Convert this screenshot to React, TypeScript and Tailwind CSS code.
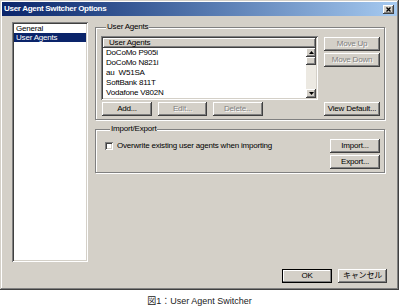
import React from 'react'

const RAISED =
  'shadow-[inset_-1px_-1px_#404040,inset_1px_1px_#ffffff,inset_-2px_-2px_#808080,inset_2px_2px_#d4d0c8]'
const SUNKEN =
  'shadow-[inset_1px_1px_#808080,inset_-1px_-1px_#ffffff,inset_2px_2px_#404040,inset_-2px_-2px_#d4d0c8]'
const UI =
  "font-['Liberation_Sans','Noto_Sans_CJK_JP',sans-serif] text-[8px] tracking-[-0.2px] leading-[10px]"

type BtnProps = { label: string; width: string; disabled?: boolean; isDefault?: boolean }

const Btn: React.FC<BtnProps> = ({ label, width, disabled, isDefault }) => (
  <div
    className={`flex h-[14px] shrink-0 items-center justify-center bg-[#d4d0c8] ${width} ${
      isDefault ? 'border border-black shadow-[inset_-1px_-1px_#808080,inset_1px_1px_#ffffff]' : RAISED
    } ${disabled ? 'text-[#808080] [text-shadow:1px_1px_0_#ffffff]' : 'text-black'}`}
  >
    {label}
  </div>
)

const agents = ['DoCoMo P905i', 'DoCoMo N821i', 'au  W51SA', 'SoftBank 811T', 'Vodafone V802N']

const Arrow: React.FC<{ up?: boolean }> = ({ up }) => (
  <div className={`flex h-[9px] w-[10px] items-center justify-center bg-[#d4d0c8] ${RAISED}`}>
    <svg width="5" height="3" viewBox="0 0 5 3">
      <polygon points={up ? '0,3 2.5,0 5,3' : '0,0 2.5,3 5,0'} fill="#000" />
    </svg>
  </div>
)

export default function App() {
  return (
    <div className={`h-[308px] w-[399px] bg-white ${UI}`}>
      {/* Dialog window */}
      <div
        className="flex h-[290px] w-[399px] flex-col bg-[#d4d0c8] px-[2px] pt-[2px] shadow-[inset_-1px_-1px_#404040,inset_1px_1px_#d4d0c8,inset_-2px_-2px_#808080,inset_2px_2px_#ffffff]"
      >
        {/* Title bar */}
        <div className="flex h-[14px] items-center justify-between bg-gradient-to-r from-[#0a246a] to-[#a6caf0] pl-[2px] pr-[3px]">
          <span className="font-['Liberation_Sans',sans-serif] text-[8px] font-bold tracking-[-0.3px] text-white">
            User Agent Switcher Options
          </span>
          <div className={`flex h-[9px] w-[11px] items-center justify-center bg-[#d4d0c8] ${RAISED}`}>
            <svg width="5" height="5" viewBox="0 0 5 5">
              <path d="M0.5 0.5L4.5 4.5M4.5 0.5L0.5 4.5" stroke="#000" strokeWidth="1.3" />
            </svg>
          </div>
        </div>

        {/* Body */}
        <div className="flex pl-[10px] pt-[6px]">
          {/* Category list */}
          <div className={`h-[240px] w-[76px] bg-white p-[2px] ${SUNKEN}`}>
            <div className="h-[9px] pl-[2px] leading-[9px] text-black">General</div>
            <div className="h-[9px] bg-[#0a246a] pl-[2px] leading-[9px] text-white">User Agents</div>
          </div>

          <div className="ml-[7px] flex w-[290px] flex-col">
            {/* User Agents group */}
            <fieldset className="border border-[#808080] pb-[3px] pl-[5px] pr-[4px] pt-[4px] shadow-[inset_1px_1px_0_#ffffff,1px_1px_0_#ffffff]">
              <legend className="ml-[5px] bg-[#d4d0c8] px-[1px] leading-[10px]">User Agents</legend>
              <div className="flex gap-[6px]">
                <div className={`flex h-[64px] w-[217px] flex-col bg-white p-[2px] ${SUNKEN}`}>
                  <div className={`h-[10px] shrink-0 bg-[#d4d0c8] pl-[6px] leading-[10px] ${RAISED}`}>User Agents</div>
                  <div className="flex min-h-0 flex-1">
                    <div className="flex-1 overflow-hidden">
                      {agents.map((a) => (
                        <div key={a} className="h-[10px] whitespace-pre pl-[3px] leading-[10px] text-black">
                          {a}
                        </div>
                      ))}
                    </div>
                    <div className="flex w-[10px] flex-col bg-[#ece9e2]">
                      <Arrow up />
                      <div className={`h-[8px] bg-[#d4d0c8] ${RAISED}`} />
                      <div className="flex-1" />
                      <Arrow />
                    </div>
                  </div>
                </div>
                <div className="flex flex-col gap-[2px] pt-[1px]">
                  <Btn label="Move Up" width="w-[56px]" disabled />
                  <Btn label="Move Down" width="w-[56px]" disabled />
                </div>
              </div>
              <div className="mt-[2px] flex pl-[1px]">
                <Btn label="Add..." width="w-[50px]" />
                <div className="ml-[6px]">
                  <Btn label="Edit..." width="w-[49px]" disabled />
                </div>
                <div className="ml-[6px]">
                  <Btn label="Delete..." width="w-[50px]" disabled />
                </div>
                <div className="ml-auto">
                  <Btn label="View Default..." width="w-[56px]" />
                </div>
              </div>
            </fieldset>

            {/* Import/Export group */}
            <fieldset className="mt-[4px] flex border border-[#808080] pb-[3px] pl-[9px] pr-[4px] pt-[5px] shadow-[inset_1px_1px_0_#ffffff,1px_1px_0_#ffffff]">
              <legend className="ml-[5px] bg-[#d4d0c8] px-[1px] leading-[10px]">Import/Export</legend>
              <div className="flex w-full">
                <div className="flex items-start gap-[4px] pt-[3px]">
                  <div className={`h-[8px] w-[8px] bg-white ${SUNKEN}`} />
                  <span className="leading-[8px] text-black">Overwrite existing user agents when importing</span>
                </div>
                <div className="ml-auto flex flex-col gap-[2px]">
                  <Btn label="Import..." width="w-[50px]" />
                  <Btn label="Export..." width="w-[50px]" />
                </div>
              </div>
            </fieldset>
          </div>
        </div>

        {/* Footer buttons */}
        <div className="mt-[7px] flex justify-end gap-[6px] pr-[10px]">
          <Btn label="OK" width="w-[50px]" isDefault />
          <Btn label="キャンセル" width="w-[49px]" />
        </div>
      </div>

      {/* Caption */}
      <div className="mt-[5px] flex justify-center font-['Liberation_Sans','Noto_Sans_CJK_JP',sans-serif] text-[9px] leading-[12px] tracking-normal text-[#222]">
        図1：User Agent Switcher
      </div>
    </div>
  )
}
